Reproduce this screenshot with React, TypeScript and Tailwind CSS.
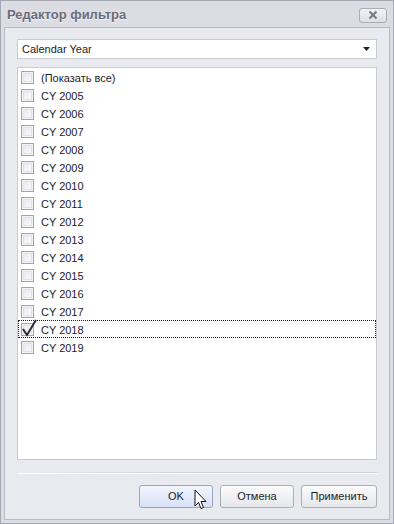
import React from "react";

const years = ["2005","2006","2007","2008","2009","2010","2011","2012","2013","2014","2015","2016","2017","2018","2019"];

function Box({ checked }: { checked?: boolean }) {
  return (
    <div className="relative w-[13px] h-[13px] border border-[#a3a5ae] bg-[#f3f3f5] shrink-0">
      <div className="absolute inset-[1px] border border-[#e2e3e8] bg-gradient-to-br from-[#e9eaee] to-[#fafafb]" />
      {checked && (
        <svg className="absolute left-[-1px] top-[-5px]" width="17" height="19" viewBox="0 0 17 19">
          <path d="M2 10 L6 16 L15 1" fill="none" stroke="#2b2b3a" strokeWidth="2" />
        </svg>
      )}
    </div>
  );
}

function Row({ label, checked, focus }: { label: string; checked?: boolean; focus?: boolean }) {
  return (
    <div className={`h-[18px] flex items-center gap-[7px] pl-[3px] ${focus ? "outline outline-1 outline-dotted outline-[#222] -outline-offset-1" : ""}`}>
      <Box checked={checked} />
      <span className="pt-[2px]">{label}</span>
    </div>
  );
}

function Btn({ children, hover, w }: { children: React.ReactNode; hover?: boolean; w: string }) {
  return (
    <div
      className={`${w} h-[23px] flex items-center justify-center rounded-[3px] border ${
        hover
          ? "border-[#9aa4bf] bg-gradient-to-b from-[#f2f5fd] to-[#d7e1f6]"
          : "border-[#acadb6] bg-gradient-to-b from-[#fbfbfc] to-[#e6e7eb]"
      }`}
    >
      {children}
    </div>
  );
}

export default function App() {
  return (
    <div
      className="w-[394px] h-[524px] bg-[#dcdde3] border border-[#a6a7b2] flex flex-col text-[11px] text-[#1c1c2c]"
      style={{ fontFamily: "'Liberation Sans', Arial, sans-serif" }}
    >
      <div className="h-[26px] flex items-center justify-between pl-[6px] pr-[6px] shrink-0">
        <span
          className="font-bold text-[13px] text-[#6a6c7a] pt-[1px]"
          style={{ textShadow: "0 1px 0 #f4f4f7" }}
        >
          Редактор фильтра
        </span>
        <div className="w-[28px] h-[15px] mt-[2px] rounded-[3px] border border-[#a9abb5] bg-gradient-to-b from-[#f3f3f6] to-[#dedfe5] flex items-center justify-center">
          <svg width="10" height="8" viewBox="0 0 10 8">
            <path d="M1.5 0.5 L8.5 7.5 M8.5 0.5 L1.5 7.5" stroke="#7a7c88" strokeWidth="2.2" />
          </svg>
        </div>
      </div>
      <div className="flex-1 mx-[3px] mb-[3px] border border-[#b9bac4] bg-[#e9eaef] flex flex-col px-[12px] pt-[11px] pb-[10px]">
        <div className="h-[20px] bg-white border border-[#cacbd3] flex items-center justify-between pl-[4px] pr-[4px] shrink-0">
          <span className="pt-[1px]">Calendar Year</span>
          <svg width="8" height="5" viewBox="0 0 8 5" className="mr-[1px]">
            <path d="M0 0 H7 L3.5 4 Z" fill="#22222e" />
          </svg>
        </div>
        <div className="mt-[8px] h-[393px] bg-white border border-[#cacbd3] shrink-0">
          <Row label="(Показать все)" />
          {years.map((y) => (
            <Row key={y} label={`CY ${y}`} checked={y === "2018"} focus={y === "2018"} />
          ))}
        </div>
        <div className="mt-[12px] h-[2px] bg-gradient-to-r from-transparent via-[#d0d1d8] to-[#d0d1d8] border-b border-white" />
        <div className="flex justify-end gap-[7px] mt-[11px] relative">
          <Btn hover w="w-[74px]">OK</Btn>
          <Btn w="w-[74px]">Отмена</Btn>
          <Btn w="w-[76px]">Применить</Btn>
          <svg className="absolute left-[177px] top-[4px]" width="14" height="22" viewBox="0 0 14 22">
            <path d="M1 1 L1 17 L4.5 13.5 L7 19.5 L9.5 18.5 L7 12.5 L12 12.5 Z" fill="#fff" stroke="#111" strokeWidth="1" strokeLinejoin="miter" />
          </svg>
        </div>
      </div>
    </div>
  );
}
